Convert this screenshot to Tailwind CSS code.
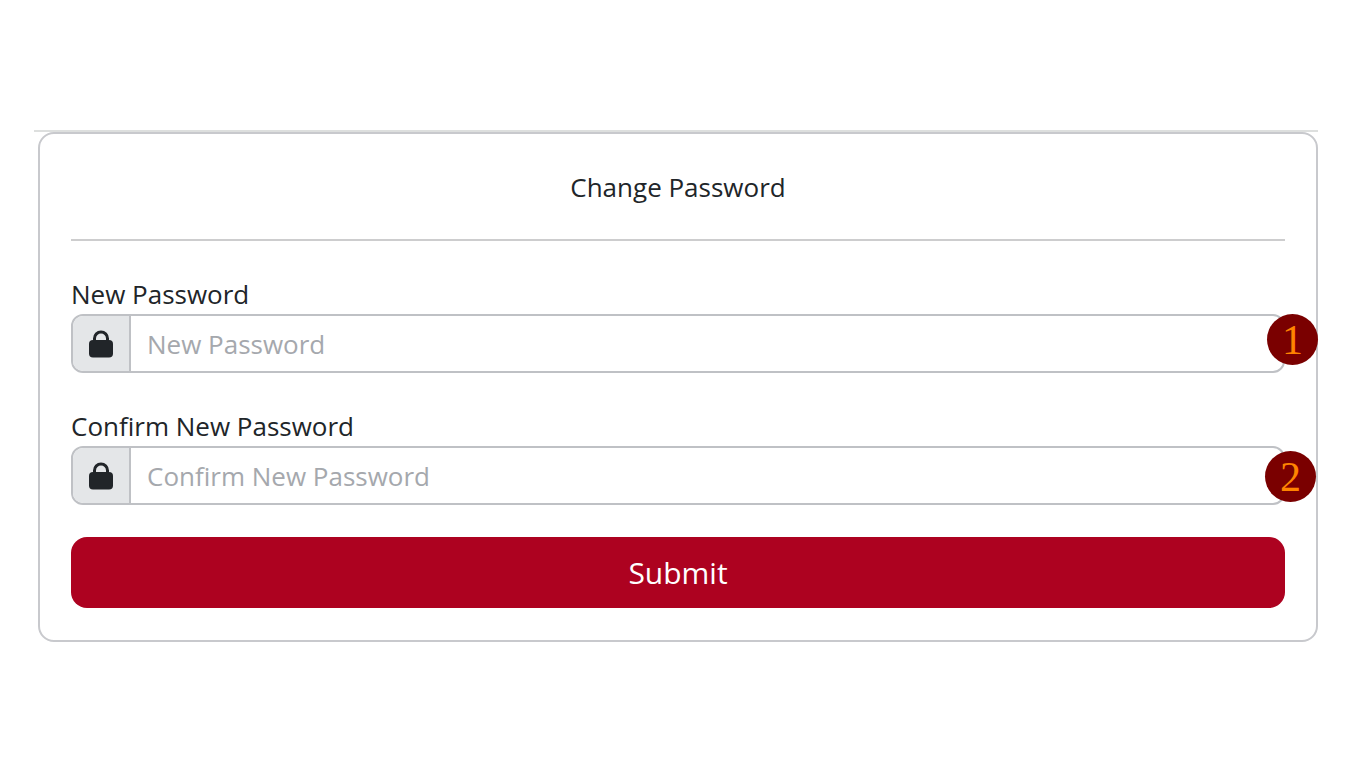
<!DOCTYPE html>
<html lang="en">
<head>
<meta charset="utf-8">
<meta name="viewport" content="width=device-width, initial-scale=1">
<title>Change Password</title>
<script src="https://cdn.jsdelivr.net/npm/@tailwindcss/browser@4"></script>
</head>
<body class="bg-white font-['Open_Sans',sans-serif] text-[26px] leading-[34px] text-[#212529]">
<main class="mt-[130px] mr-12 mb-12 ml-[34px] border-t-2 border-[#dddfde] pl-1">
  <form class="rounded-2xl border-2 border-[#c8c9cd] px-[31px] pt-9 pb-8">
    <h1 class="border-b-2 border-[#cdcdce] pb-[35px] text-center">Change Password</h1>

    <div class="relative mt-9">
      <label for="new-password" class="mb-[3px] block">New Password</label>
      <div class="flex h-[59px] overflow-hidden rounded-xl border-2 border-[#bfc1c5]">
        <span class="flex w-[58px] items-center justify-center border-r-2 border-[#bfc1c5] bg-[#e4e6e8]">
          <svg class="h-7 w-[26px]" viewBox="0 0 26 28" aria-hidden="true"><path d="M6.500 12V8.500a6.500 6.500 0 0 1 13 0V12" fill="none" stroke="#212529" stroke-width="3"/><rect x="1" y="10" width="24" height="17.500" rx="4" fill="#212529"/></svg>
        </span>
        <input id="new-password" type="password" placeholder="New Password" class="min-w-0 flex-1 px-4 outline-none placeholder:text-[#a5a8ad]">
      </div>
      <span class="absolute right-[-33px] bottom-2 flex size-[51px] items-center justify-center rounded-full bg-[#7a0000] font-['Liberation_Serif',serif] text-[42px] text-[#ff8400]">1</span>
    </div>

    <div class="relative mt-9">
      <label for="confirm-password" class="mb-[3px] block">Confirm New Password</label>
      <div class="flex h-[59px] overflow-hidden rounded-xl border-2 border-[#bfc1c5]">
        <span class="flex w-[58px] items-center justify-center border-r-2 border-[#bfc1c5] bg-[#e4e6e8]">
          <svg class="h-7 w-[26px]" viewBox="0 0 26 28" aria-hidden="true"><path d="M6.500 12V8.500a6.500 6.500 0 0 1 13 0V12" fill="none" stroke="#212529" stroke-width="3"/><rect x="1" y="10" width="24" height="17.500" rx="4" fill="#212529"/></svg>
        </span>
        <input id="confirm-password" type="password" placeholder="Confirm New Password" class="min-w-0 flex-1 px-4 outline-none placeholder:text-[#a5a8ad]">
      </div>
      <span class="absolute right-[-31px] bottom-[3px] flex size-[51px] items-center justify-center rounded-full bg-[#7a0000] font-['Liberation_Serif',serif] text-[42px] text-[#ff8400]">2</span>
    </div>

    <button type="submit" class="mt-8 block h-[71px] w-full rounded-2xl bg-[#ad0220] text-[30px] text-white">Submit</button>
  </form>
</main>
</body>
</html>
